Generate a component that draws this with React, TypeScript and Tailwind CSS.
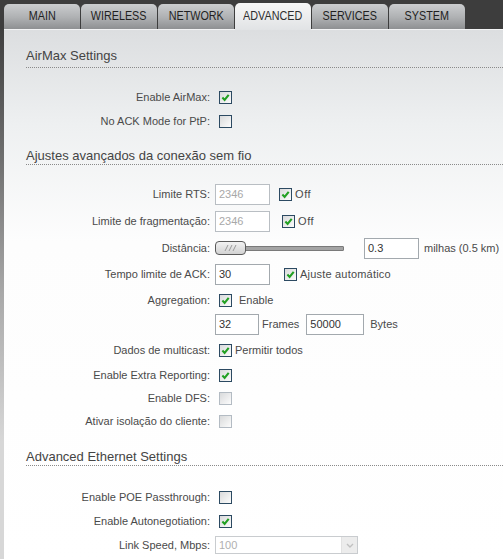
import React from 'react';

const tabs = ['MAIN', 'WIRELESS', 'NETWORK', 'ADVANCED', 'SERVICES', 'SYSTEM'];

const Check: React.FC<{ checked?: boolean; disabled?: boolean; className?: string }> = ({ checked, disabled, className = '' }) => (
  <span
    className={`inline-flex h-[13px] w-[13px] shrink-0 items-center justify-center border bg-[linear-gradient(135deg,#d9dadb,#fcfcfc)] ${
      disabled ? 'border-[#b3bbc3]' : 'border-[#2c4a62]'
    } ${className}`}
  >
    {checked && (
      <svg viewBox="0 0 9 9" className="h-[9px] w-[9px]">
        <path d="M1.4 4.6 L3.6 6.9 L7.7 1.9" stroke="#22a022" strokeWidth="2.1" fill="none" />
      </svg>
    )}
  </span>
);

const Field: React.FC<{ value: string; w: string; disabled?: boolean; className?: string }> = ({ value, w, disabled, className = '' }) => (
  <div
    className={`flex h-[21px] items-center border bg-white pl-[3px] text-[11px] ${w} ${
      disabled ? 'border-[#b9bec3] text-[#a8a8a8]' : 'border-[#a3a9ae] text-[#333]'
    } ${className}`}
  >
    {value}
  </div>
);

const Row: React.FC<{ label: string; h: string; children?: React.ReactNode }> = ({ label, h, children }) => (
  <div className={`flex items-center ${h}`}>
    <div className="w-[206px] shrink-0 text-right">{label}</div>
    {children}
  </div>
);

const Header: React.FC<{ title: string; className: string }> = ({ title, className }) => (
  <div className={`ml-[22px] border-b border-dotted border-[#8a8a8a] text-[13px] leading-[15px] text-[#444] ${className}`}>
    {title}
  </div>
);

export default function App() {
  return (
    <div className="flex h-[559px] w-[503px] flex-col overflow-hidden bg-[#3d3d3d] font-['Liberation_Sans',Arial,sans-serif] text-[11px] text-[#4a4a4a]">
      {/* tab strip */}
      <div className="flex h-[29px] shrink-0 items-end gap-px pl-[4px]">
        {tabs.map(t => {
          const active = t === 'ADVANCED';
          return (
            <div
              key={t}
              className={`relative flex w-[76px] items-center justify-center rounded-t-[5px] pb-[1px] text-[13px] ${
                active
                  ? 'z-10 -mb-px h-[27px] bg-[linear-gradient(to_bottom,#f7f7f7,#e1e3e5)] text-[#2e2e2e]'
                  : 'h-[25px] bg-[linear-gradient(to_bottom,#cbcdcf,#aeb0b2_55%,#8e9092)] text-[#1f1f1f]'
              }`}
            >
              <span className="inline-block scale-x-[0.83] whitespace-nowrap">{t}</span>
            </div>
          );
        })}
      </div>

      <div className="flex flex-1">
        <div className="w-[4px] shrink-0 bg-[linear-gradient(to_bottom,#3f3f3f,#707070_25%,#a9a9a9_50%,#d7d7d7_78%)]" />

        <div className="flex-1 border-t border-[#f2f3f4] bg-[linear-gradient(to_bottom,#dcdee0_0%,#eef0f1_18%,#fdfdfd_40%,#ffffff)]">
          <Header title="AirMax Settings" className="mt-[18px] pb-[4px]" />

          <div className="mt-[17px]">
            <Row label="Enable AirMax:" h="h-[24px]">
              <Check checked className="ml-[9px]" />
            </Row>
            <Row label="No ACK Mode for PtP:" h="h-[24px]">
              <Check className="ml-[9px]" />
            </Row>
          </div>

          <Header title="Ajustes avançados da conexão sem fio" className="mt-[15px] pb-[1px]" />

          <div className="mt-[15px]">
            <Row label="Limite RTS:" h="h-[28px]">
              <Field value="2346" w="w-[55px]" disabled className="ml-[5px]" />
              <Check checked className="ml-[9px]" />
              <span className="ml-[3px] text-[11px] tracking-[0.6px]">Off</span>
            </Row>
            <Row label="Limite de fragmentação:" h="h-[27px]">
              <Field value="2346" w="w-[55px]" disabled className="ml-[5px]" />
              <Check checked className="ml-[12px]" />
              <span className="ml-[3px] text-[11px] tracking-[0.6px]">Off</span>
            </Row>
            <Row label="Distância:" h="h-[26px]">
              <div className="relative ml-[5px] flex h-[16px] w-[129px] items-center">
                <div className="h-[5px] w-full rounded-[1px] border border-[#7a7a7a] bg-[#a4a4a4]" />
                <div className="absolute left-0 top-[1px] flex h-[14px] w-[31px] items-center justify-center rounded-[4px] border border-[#5a5a5a] bg-[linear-gradient(to_bottom,#f2f2f2,#d2d2d2)]">
                  <svg viewBox="0 0 14 8" className="h-[8px] w-[14px]">
                    <path d="M1 7 L4 1 M5 7 L8 1 M9 7 L12 1" stroke="#9a9a9a" strokeWidth="1" fill="none" />
                  </svg>
                </div>
              </div>
              <Field value="0.3" w="w-[55px]" className="ml-[20px] h-[20px]" />
              <span className="ml-[5px]">milhas (0.5 km)</span>
            </Row>
            <Row label="Tempo limite de ACK:" h="h-[27px]">
              <Field value="30" w="w-[55px]" className="ml-[5px]" />
              <Check checked className="ml-[14px]" />
              <span className="ml-[3px] text-[11px] tracking-[0.2px]">Ajuste automático</span>
            </Row>
            <Row label="Aggregation:" h="h-[24px]">
              <Check checked className="ml-[9px]" />
              <span className="ml-[7px]">Enable</span>
            </Row>
            <div className="flex h-[25px] items-center pl-[211px]">
              <Field value="32" w="w-[44px]" className="h-[20px]" />
              <span className="ml-[3px]">Frames</span>
              <Field value="50000" w="w-[58px]" className="ml-[7px] h-[20px]" />
              <span className="ml-[6px]">Bytes</span>
            </div>
            <Row label="Dados de multicast:" h="h-[26px]">
              <Check checked className="ml-[9px]" />
              <span className="ml-[3px]">Permitir todos</span>
            </Row>
            <Row label="Enable Extra Reporting:" h="h-[24px]">
              <Check checked className="ml-[9px]" />
            </Row>
            <Row label="Enable DFS:" h="h-[23px]">
              <Check disabled className="ml-[9px]" />
            </Row>
            <Row label="Ativar isolação do cliente:" h="h-[23px]">
              <Check disabled className="ml-[9px]" />
            </Row>
          </div>

          <Header title="Advanced Ethernet Settings" className="mt-[16px] pb-[1px]" />

          <div className="mt-[19px]">
            <Row label="Enable POE Passthrough:" h="h-[24px]">
              <Check className="ml-[9px]" />
            </Row>
            <Row label="Enable Autonegotiation:" h="h-[24px]">
              <Check checked className="ml-[9px]" />
            </Row>
            <Row label="Link Speed, Mbps:" h="h-[24px]">
              <div className="ml-[5px] flex h-[18px] w-[143px] items-center border border-[#c9cccf] bg-white pl-[3px] text-[11px] text-[#b0b0b0]">
                <span className="flex-1">100</span>
                <span className="flex h-full w-[16px] items-center justify-center border-l border-[#e2e2e2] bg-[#ececec]">
                  <svg viewBox="0 0 8 5" className="h-[5px] w-[8px]">
                    <path d="M1 1 L4 4 L7 1" stroke="#c0c0c0" strokeWidth="1.4" fill="none" />
                  </svg>
                </span>
              </div>
            </Row>
          </div>
        </div>
      </div>
    </div>
  );
}
